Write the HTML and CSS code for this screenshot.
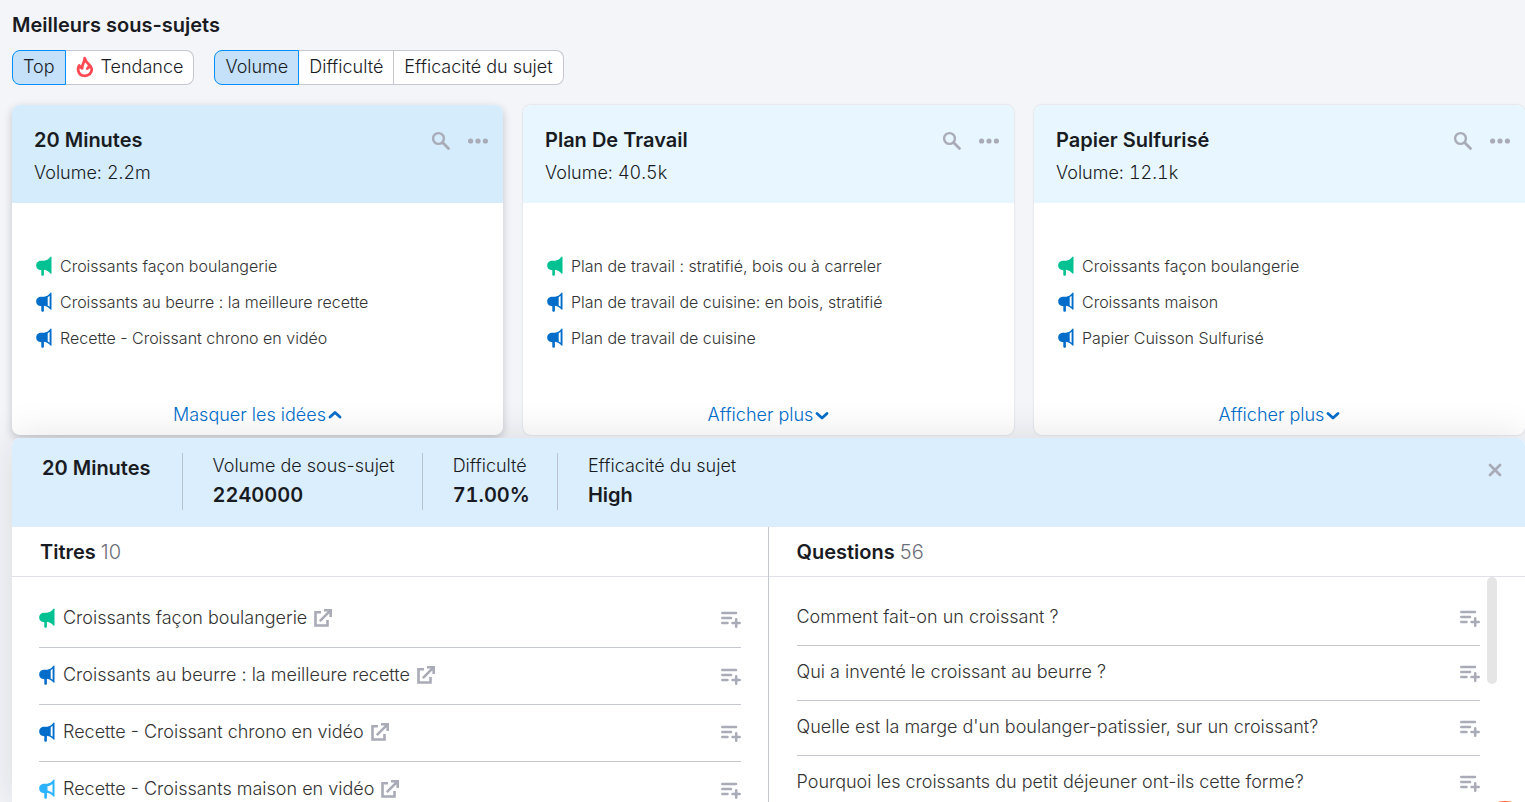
FILE: index.html
```html
<!DOCTYPE html>
<html lang="fr">
<head>
<meta charset="utf-8">
<title>Meilleurs sous-sujets</title>
<link rel="stylesheet" href="styles.css">
</head>
<body>
<svg class="sprite" aria-hidden="true">
  <symbol id="horn-full" viewBox="0 0 16 20"><path d="M15.500 1v16.200c0 .6-.6.700-1 .3-2.200-2-3.500-3.300-6.600-3.700v5a1 1 0 0 1-1 .9h-.6a1 1 0 0 1-1-.9v-4.600C2.500 14.200.2 12.400.2 9.500S2.300 4.800 5.500 4.800c4.400 0 6.500-1 9-4.100.4-.4 1-.3 1 .3z"/></symbol>
  <symbol id="horn-half" viewBox="0 0 16 20"><path fill-rule="evenodd" d="M15.500 1v16.200c0 .6-.6.700-1 .3-2.200-2-3.500-3.300-6.600-3.700v5a1 1 0 0 1-1 .9h-.6a1 1 0 0 1-1-.9v-4.600C2.500 14.200.2 12.400.2 9.500S2.300 4.800 5.500 4.800c4.400 0 6.500-1 9-4.100.4-.4 1-.3 1 .3zM11.700 5.200v8.200l1.900 1.300V3.800z"/></symbol>
  <symbol id="horn-open" viewBox="0 0 16 20"><path fill-rule="evenodd" d="M15.500 1v16.200c0 .6-.6.700-1 .3-2.200-2-3.500-3.300-6.600-3.700v5a1 1 0 0 1-1 .9h-.6a1 1 0 0 1-1-.9v-4.600C2.500 14.200.2 12.400.2 9.500S2.300 4.800 5.500 4.800c4.400 0 6.500-1 9-4.100.4-.4 1-.3 1 .3zM8.500 7.300v4.200c2 .4 3.500 1.300 5 2.500V4.900c-1.500 1.200-3 2-5 2.400z"/></symbol>
  <symbol id="flame" viewBox="0 0 18 22"><path fill="none" stroke="currentColor" stroke-width="2.800" stroke-linejoin="round" stroke-linecap="round" d="M8.700 2.200C8.900 6.500 5.600 8 6.200 12.300 4.600 11.800 3.500 10.800 3.200 9.500 2 11.500 2 13.500 2.200 14.500 2.900 18 5.700 19.800 9 19.800c3.700 0 6.800-2.600 6.800-6.500 0-4.500-5.800-5.300-7.100-11.100zM12.800 10.500c-.1 1-.7 1.700-1.500 2"/></symbol>
  <symbol id="search" viewBox="0 0 20 20"><circle cx="7.500" cy="7.500" r="5.400" fill="none" stroke="currentColor" stroke-width="2.400"/><path fill="none" stroke="currentColor" stroke-width="2.800" stroke-linecap="round" d="M11.800 11.800l5.700 5.700"/></symbol>
  <symbol id="dots" viewBox="0 0 20 20"><circle cx="2.600" cy="10" r="2.600"/><circle cx="10" cy="10" r="2.600"/><circle cx="17.400" cy="10" r="2.600"/></symbol>
  <symbol id="up" viewBox="0 0 14 10"><path fill="none" stroke="currentColor" stroke-width="2.800" stroke-linecap="round" stroke-linejoin="round" d="M2 7l5-4.500L12 7"/></symbol>
  <symbol id="down" viewBox="0 0 14 10"><path fill="none" stroke="currentColor" stroke-width="2.800" stroke-linecap="round" stroke-linejoin="round" d="M2 3.500L7 8l5-4.500"/></symbol>
  <symbol id="close" viewBox="0 0 14 14"><path fill="none" stroke="currentColor" stroke-width="2.800" stroke-linecap="round" d="M2 2l10 10M12 2L2 12"/></symbol>
  <symbol id="external" viewBox="0 0 18 18"><path fill="none" stroke="currentColor" stroke-width="2.600" d="M7 3.300H1.500v13.200h12V11"/><path fill="none" stroke="currentColor" stroke-width="2.600" d="M5.800 12.200L15.800 2.200M10 1.300h6.700V8"/></symbol>
  <symbol id="add" viewBox="0 0 20 18"><path fill="none" stroke="currentColor" stroke-width="2.500" stroke-linecap="round" d="M1.300 2h13.700M1.300 7h8.700M1.300 12h5.200M11.500 12h7.200M15.200 8.300v7.500"/></symbol>
</svg>

<main class="page">
  <h1 class="page-title">Meilleurs sous-sujets</h1>
  <div class="filters">
    <div class="segment" role="group" aria-label="Type">
      <button class="segment-item active" type="button">Top</button>
      <button class="segment-item" type="button"><svg class="flame"><use href="#flame"/></svg>Tendance</button>
    </div>
    <div class="segment" role="group" aria-label="Tri">
      <button class="segment-item active" type="button">Volume</button>
      <button class="segment-item" type="button">Difficulté</button>
      <button class="segment-item" type="button">Efficacité du sujet</button>
    </div>
  </div>

  <section class="cards">
    <article class="card selected">
      <header class="card-head">
        <div><h2 class="card-title">20 Minutes</h2><p class="card-volume">Volume: <span class="num">2.2m</span></p></div>
        <div class="card-tools">
          <button class="icon-button" type="button" aria-label="Rechercher"><svg class="tool"><use href="#search"/></svg></button>
          <button class="icon-button" type="button" aria-label="Plus d'options"><svg class="tool"><use href="#dots"/></svg></button>
        </div>
      </header>
      <ul class="ideas">
        <li><svg class="horn green"><use href="#horn-full"/></svg>Croissants façon boulangerie</li>
        <li><svg class="horn blue"><use href="#horn-half"/></svg>Croissants au beurre : la meilleure recette</li>
        <li><svg class="horn blue"><use href="#horn-half"/></svg>Recette - Croissant chrono en vidéo</li>
      </ul>
      <button class="toggle" type="button">Masquer les idées<svg class="chevron"><use href="#up"/></svg></button>
    </article>
    <article class="card">
      <header class="card-head">
        <div><h2 class="card-title">Plan De Travail</h2><p class="card-volume">Volume: <span class="num">40.5k</span></p></div>
        <div class="card-tools">
          <button class="icon-button" type="button" aria-label="Rechercher"><svg class="tool"><use href="#search"/></svg></button>
          <button class="icon-button" type="button" aria-label="Plus d'options"><svg class="tool"><use href="#dots"/></svg></button>
        </div>
      </header>
      <ul class="ideas">
        <li><svg class="horn green"><use href="#horn-full"/></svg>Plan de travail : stratifié, bois ou à carreler</li>
        <li><svg class="horn blue"><use href="#horn-half"/></svg>Plan de travail de cuisine: en bois, stratifié</li>
        <li><svg class="horn blue"><use href="#horn-half"/></svg>Plan de travail de cuisine</li>
      </ul>
      <button class="toggle" type="button">Afficher plus<svg class="chevron"><use href="#down"/></svg></button>
    </article>
    <article class="card">
      <header class="card-head">
        <div><h2 class="card-title">Papier Sulfurisé</h2><p class="card-volume">Volume: <span class="num">12.1k</span></p></div>
        <div class="card-tools">
          <button class="icon-button" type="button" aria-label="Rechercher"><svg class="tool"><use href="#search"/></svg></button>
          <button class="icon-button" type="button" aria-label="Plus d'options"><svg class="tool"><use href="#dots"/></svg></button>
        </div>
      </header>
      <ul class="ideas">
        <li><svg class="horn green"><use href="#horn-full"/></svg>Croissants façon boulangerie</li>
        <li><svg class="horn blue"><use href="#horn-half"/></svg>Croissants maison</li>
        <li><svg class="horn blue"><use href="#horn-half"/></svg>Papier Cuisson Sulfurisé</li>
      </ul>
      <button class="toggle" type="button">Afficher plus<svg class="chevron"><use href="#down"/></svg></button>
    </article>
  </section>

  <section class="panel">
    <header class="panel-head">
      <h2 class="panel-title">20 Minutes</h2>
      <dl class="stats">
        <div class="stat"><dt>Volume de sous-sujet</dt><dd>2240000</dd></div>
        <div class="stat"><dt>Difficulté</dt><dd>71.00%</dd></div>
        <div class="stat"><dt>Efficacité du sujet</dt><dd>High</dd></div>
      </dl>
      <button class="icon-button panel-close" type="button" aria-label="Fermer"><svg class="close"><use href="#close"/></svg></button>
    </header>
    <div class="columns">
      <section class="column titles">
        <h3 class="column-title">Titres <span class="count">10</span></h3>
        <ul class="rows">
          <li class="row"><svg class="horn green"><use href="#horn-full"/></svg><a class="row-text" href="#">Croissants façon boulangerie<svg class="external"><use href="#external"/></svg></a><button class="icon-button" type="button" aria-label="Ajouter"><svg class="add"><use href="#add"/></svg></button></li>
          <li class="row"><svg class="horn blue"><use href="#horn-half"/></svg><a class="row-text" href="#">Croissants au beurre : la meilleure recette<svg class="external"><use href="#external"/></svg></a><button class="icon-button" type="button" aria-label="Ajouter"><svg class="add"><use href="#add"/></svg></button></li>
          <li class="row"><svg class="horn blue"><use href="#horn-half"/></svg><a class="row-text" href="#">Recette - Croissant chrono en vidéo<svg class="external"><use href="#external"/></svg></a><button class="icon-button" type="button" aria-label="Ajouter"><svg class="add"><use href="#add"/></svg></button></li>
          <li class="row"><svg class="horn sky"><use href="#horn-open"/></svg><a class="row-text" href="#">Recette - Croissants maison en vidéo<svg class="external"><use href="#external"/></svg></a><button class="icon-button" type="button" aria-label="Ajouter"><svg class="add"><use href="#add"/></svg></button></li>
        </ul>
      </section>
      <section class="column questions">
        <h3 class="column-title">Questions <span class="count">56</span></h3>
        <div class="scroller">
          <ul class="rows">
            <li class="row"><span class="row-text">Comment fait-on un croissant ?</span><button class="icon-button" type="button" aria-label="Ajouter"><svg class="add"><use href="#add"/></svg></button></li>
            <li class="row"><span class="row-text">Qui a inventé le croissant au beurre ?</span><button class="icon-button" type="button" aria-label="Ajouter"><svg class="add"><use href="#add"/></svg></button></li>
            <li class="row"><span class="row-text">Quelle est la marge d'un boulanger-patissier, sur un croissant?</span><button class="icon-button" type="button" aria-label="Ajouter"><svg class="add"><use href="#add"/></svg></button></li>
            <li class="row"><span class="row-text">Pourquoi les croissants du petit déjeuner ont-ils cette forme?</span><button class="icon-button" type="button" aria-label="Ajouter"><svg class="add"><use href="#add"/></svg></button></li>
          </ul>
          <div class="scroll-thumb"></div>
        </div>
      </section>
    </div>
  </section>
</main>
<button class="help" type="button" aria-label="Aide"></button>
</body>
</html>
```
FILE: styles.css
```css
* { box-sizing: border-box; }
body {
  margin: 0;
  height: 100vh;
  overflow: hidden;
  background: #f4f5f9;
  color: #191b23;
  font: 300 18px/24px Inter, "Liberation Sans", sans-serif;
}
h1, h2, h3, p, ul, dl, dd { margin: 0; padding: 0; }
ul { list-style: none; }
button { font: inherit; color: inherit; cursor: pointer; }
svg { display: block; flex: none; fill: currentColor; }
.sprite { position: absolute; width: 0; height: 0; }

.page { display: flex; flex-direction: column; height: 100%; padding: 12px 0 0 12px; }
.page-title { font-size: 20px; line-height: 26px; font-weight: 600; }

.filters { display: flex; gap: 20px; margin-top: 12px; }
.segment { display: flex; }
.segment-item {
  display: flex;
  align-items: center;
  height: 35px;
  padding: 0 10px 2px;
  border: 1px solid #c4c7cf;
  border-left-width: 0;
  background: #fff;
}
.segment-item:last-child { border-radius: 0 8px 8px 0; }
.segment-item.active { padding: 0 10px 2px; border: 1px solid #008ff8; border-radius: 8px 0 0 8px; background: #c4e1f9; }
.flame { width: 18px; height: 22px; margin-right: 7px; color: #ff4953; }

.cards { display: grid; grid-template-columns: repeat(3, minmax(0, 1fr)); gap: 20px; margin-top: 20px; }
.card {
  display: flex;
  flex-direction: column;
  height: 330px;
  border-radius: 8px;
  background: #fff;
  box-shadow: 0 0 2px rgba(25, 27, 35, .2);
}
.card.selected { box-shadow: 0 3px 8px rgba(25, 27, 35, .22); }
.card-head {
  display: flex;
  justify-content: space-between;
  height: 98px;
  padding: 22px 15px 0 22px;
  border-radius: 8px 8px 0 0;
  background: #e8f7ff;
}
.selected .card-head { background: #d5ecfd; }
.card-title, .panel-title { font-size: 20px; line-height: 26px; font-weight: 600; }
.card-volume { margin-top: 8px; }
.num { font-variant-numeric: tabular-nums; }
.card-tools { display: flex; gap: 17px; align-items: flex-start; padding-top: 4px; }
.icon-button { flex: none; padding: 0; border: 0; background: none; color: #a9abb6; }
.tool { width: 20px; height: 20px; }

.ideas { flex: 1; padding: 45px 24px 0; font-size: 16px; line-height: 36px; color: #333; }
.ideas li { display: flex; align-items: center; gap: 8px; }
.horn { width: 16px; height: 20px; }
.green { color: #00c192; }
.blue { color: #006dca; }
.sky { color: #2bb3ff; }
.toggle {
  display: flex;
  justify-content: center;
  align-items: center;
  gap: 2px;
  height: 40px;
  padding: 0;
  border: 0;
  border-radius: 0 0 8px 8px;
  background: none;
  color: #006dca;
}
.chevron { width: 14px; height: 10px; }

.panel {
  position: relative;
  display: flex;
  flex: 1;
  flex-direction: column;
  margin-top: 3px;
  min-height: 0;
  border-radius: 8px 8px 0 0;
  background: #fff;
  box-shadow: 0 0 40px rgba(25, 27, 35, .12);
}
.panel-head {
  display: flex;
  flex: none;
  align-items: flex-start;
  height: 89px;
  padding: 15px 23px 0 30px;
  border-radius: 8px 8px 0 0;
  background: #dbeefe;
}
.panel-title { margin-top: 2px; padding-right: 31px; }
.stats { display: flex; flex: 1; }
.stat { height: 57px; padding: 0 27px 0 30px; border-left: 1px solid #b9c3d0; }
.stat dt { line-height: 26px; }
.stat dd { margin-top: 2px; font-size: 20px; line-height: 28px; font-weight: 600; font-variant-numeric: tabular-nums; }
.panel-close { margin-top: 10px; }
.close { width: 14px; height: 14px; }

.columns { display: grid; grid-template-columns: 1fr 1fr; flex: 1; min-height: 0; overflow: hidden; }
.titles { border-right: 1px solid #c4c7cf; }
.column-title {
  height: 50px;
  padding-left: 28px;
  border-bottom: 1px solid #e0e1e9;
  font-size: 20px;
  line-height: 50px;
  font-weight: 600;
}
.count { font-weight: 300; color: #6c6e79; }
.rows { flex: 1; color: #333; }
.titles .rows { padding: 14px 27px 0; }
.row { display: flex; align-items: center; height: 57px; padding-bottom: 3px; border-bottom: 1px solid #c4c7cf; }
.row-text {
  display: flex;
  flex: 1;
  align-items: center;
  gap: 7px;
  color: inherit;
  text-decoration: none;
}
.titles .row-text { padding-left: 8px; }
.external { width: 18px; height: 18px; color: #a9abb6; }
.add { width: 20px; height: 18px; margin-top: 5px; }
.scroller { display: flex; gap: 7px; padding: 0 28px; }
.scroller .rows { padding-top: 14px; }
.scroller .row { height: 55px; }
.scroll-thumb { width: 10px; height: 107px; border-radius: 5px; background: #e5e5e5; }

.help {
  position: fixed;
  right: -8px;
  bottom: -55px;
  width: 56px;
  height: 56px;
  border: 0;
  border-radius: 50%;
  background: #ff642d;
}
```
